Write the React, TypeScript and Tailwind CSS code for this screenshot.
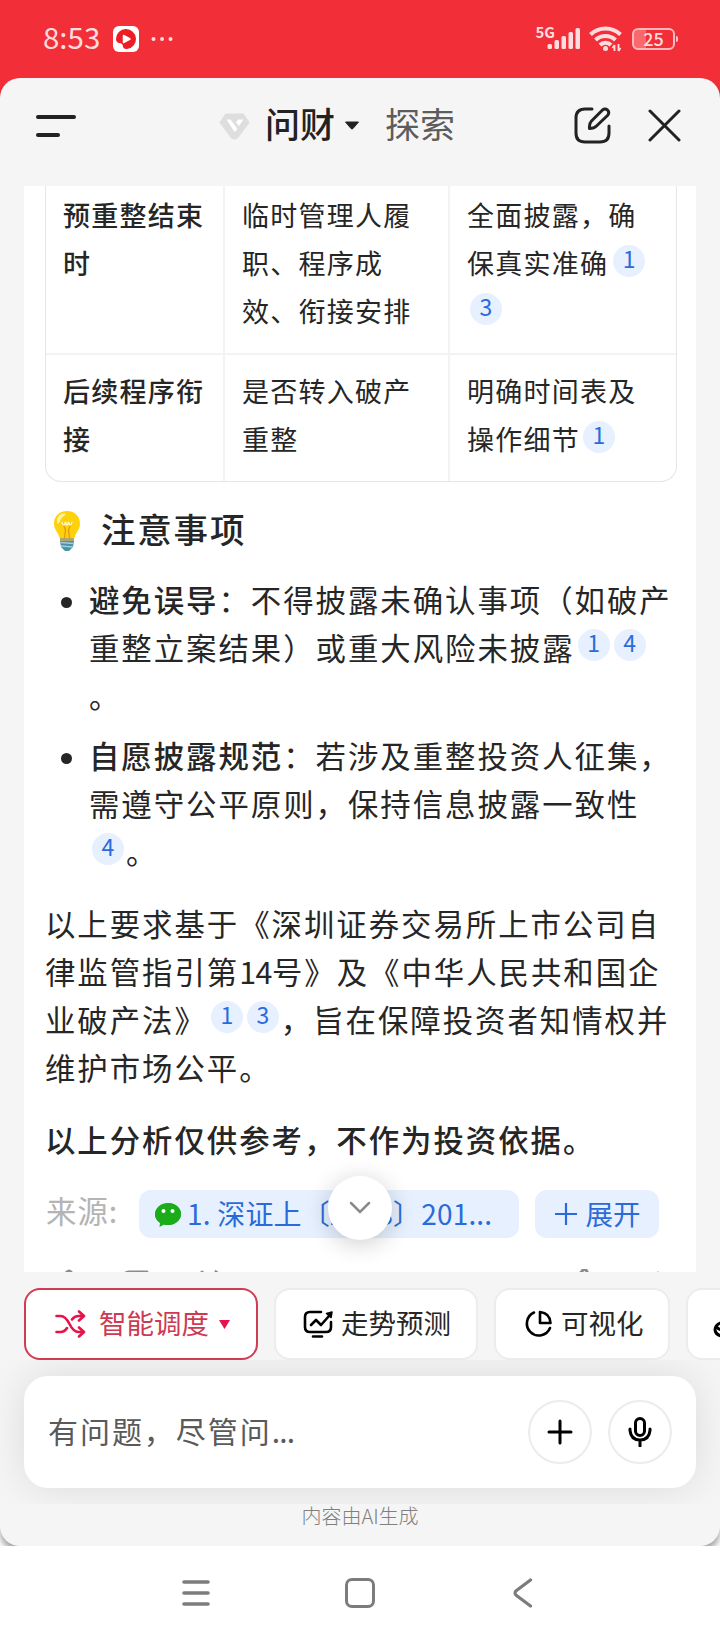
import { ReactNode } from "react";

function Cite({ n, inTable }: { n: number; inTable?: boolean }) {
  return (
    <span
      className={`relative mx-[2px] inline-flex h-8 w-8 items-center justify-center rounded-full bg-[#e6f0ff] pb-[4px] align-middle text-[23px] leading-none tracking-normal text-[#2b6bd9] ${inTable ? "-top-[6px]" : "-top-[7px]"}`}
    >
      {n}
    </span>
  );
}

function StatusBar() {
  return (
    <div className="flex h-[78px] items-center pl-[43px] pr-[42px] text-[#ffdcde]">
      <span className="w-[58px] pb-1 text-[29.500px] leading-none">8:53</span>
      <svg className="ml-3" width="26" height="26" viewBox="0 0 26 26">
        <rect width="26" height="26" rx="6" fill="#fff" />
        <path d="M3 13a10 10 0 1 1 11 10q-3 .5-4-2 0-4-4-4-3-1-3-4z" fill="#ee1c25" />
        <path d="M10.500 9.500v7l6.500-3.500z" fill="#fff" stroke="#fff" strokeWidth="1.500" strokeLinejoin="round" />
      </svg>
      <svg className="ml-3" width="24" height="6" viewBox="0 0 24 6" fill="currentColor">
        <circle cx="2.500" cy="3" r="2" />
        <circle cx="11" cy="3" r="2" />
        <circle cx="19.500" cy="3" r="2" />
      </svg>
      <div className="ml-auto flex items-center">
        <span className="-mr-2 -mt-4 text-[15px] font-bold leading-none">5G</span>
        <svg width="34" height="22" viewBox="0 0 34 22" fill="currentColor">
          <rect x="0.500" y="16" width="4.500" height="5" rx="1.500" />
          <rect x="7.500" y="12" width="4.500" height="9" rx="1.500" />
          <rect x="14.500" y="8" width="4.500" height="13" rx="1.500" />
          <rect x="21.500" y="4" width="4.500" height="17" rx="1.500" />
          <rect x="28.500" y="0" width="4.500" height="21" rx="1.500" />
        </svg>
        <svg className="ml-2" width="34" height="26" viewBox="0 0 34 26" fill="none" stroke="currentColor" strokeWidth="4">
          <path d="M1.500 8.500a21.500 21.500 0 0 1 30 0" />
          <path d="M6.500 14a14.500 14.500 0 0 1 20 0" />
          <path d="M11 19a8 8 0 0 1 11 0" />
          <circle cx="16.500" cy="22.500" r="2.500" fill="currentColor" stroke="none" />
          <path d="M25.500 19v6m0-6-2 3M29.500 18v7m0 0 2-3" strokeWidth="1.800" />
        </svg>
        <div className="ml-[9px] flex h-[22px] w-[43px] items-center justify-center rounded-[6px] border-2 border-[#ffb9bc] bg-linear-to-r from-[#f9686d] from-30% to-transparent to-30% pb-[2px] text-[18px] font-medium leading-none">
          25
        </div>
        <div className="ml-[1px] h-[6px] w-[2px] rounded-r bg-[#ffc5c8]" />
      </div>
    </div>
  );
}

function Header() {
  return (
    <header className="flex h-[108px] items-center pb-[16px] pl-9 pr-[39px]">
      <div className="flex w-[183px] flex-col gap-[14px] pt-1">
        <div className="h-1 w-10 rounded-full bg-[#222]" />
        <div className="h-1 w-6 rounded-full bg-[#222]" />
      </div>
      <svg className="mt-1" width="31" height="27" viewBox="0 0 31 27">
        <path d="M7 1.500h17l5.500 8-10.500 14q-3.500 4-7 0L1.500 9.500z" fill="#dedede" stroke="#dedede" strokeWidth="2" strokeLinejoin="round" />
        <path d="M7.500 6.500h4l7 9.500-3 3zM19 6.500h5.500l-4.500 6.500-3-3.500z" fill="#fff" />
      </svg>
      <span className="ml-[15px] pb-[3px] text-[35px] font-medium leading-none text-[#222]">问财</span>
      <svg className="ml-[9px] mt-[2px]" width="16" height="9" viewBox="0 0 16 9">
        <path d="M1.500 1h13L9 7.500q-1 1-2 0z" fill="#222" stroke="#222" strokeLinejoin="round" />
      </svg>
      <span className="ml-[25px] pb-[3px] text-[35px] leading-none text-[#5c5c5c]">探索</span>
      <div className="ml-auto flex items-center gap-[37px]">
        <svg className="mt-[3px]" width="37" height="37" viewBox="0 0 37 37" fill="none" stroke="#222" strokeWidth="3" strokeLinecap="round" strokeLinejoin="round">
          <path d="M18 2h-7Q2 2 2 11v15q0 9 9 9h15q9 0 9-9v-7" />
          <path d="M15.500 21.500q-.5-5 2-7.500L28.500 3q2.500-2 5 0 2.500 2.500 0 5.500L22.500 19q-2.500 2.500-7 2.500z" />
        </svg>
        <svg className="mt-[3px]" width="33" height="33" viewBox="0 0 33 33" fill="none" stroke="#222" strokeWidth="3" strokeLinecap="round">
          <path d="M2 2l29 29M31 2L2 31" />
        </svg>
      </div>
    </header>
  );
}

function Cell({ children, bold, last }: { children: ReactNode; bold?: boolean; last?: boolean }) {
  return (
    <div className={`pl-[17px] ${bold ? "font-medium" : ""} ${last ? "" : "border-r-2 border-[#f3f3f3]"}`}>
      {children}
    </div>
  );
}

function DataTable() {
  return (
    <div className="rounded-b-2xl border border-t-0 border-[#e6e6e6] text-[27px] leading-[48px] tracking-[1.250px]">
      <div className="grid h-[169px] grid-cols-[179px_225px_1fr] border-b-2 border-[#f3f3f3] [&>div]:pt-[5px]">
        <Cell bold>预重整结束<br />时</Cell>
        <Cell>临时管理人履<br />职、程序成<br />效、衔接安排</Cell>
        <Cell last>全面披露，确<br />保真实准确<span className="inline-block w-[3px]" /><Cite n={1} inTable /><br /><span className="inline-block w-[1px]" /><Cite n={3} inTable /></Cell>
      </div>
      <div className="grid h-[126px] grid-cols-[179px_225px_1fr] [&>div]:pt-3">
        <Cell bold>后续程序衔<br />接</Cell>
        <Cell>是否转入破产<br />重整</Cell>
        <Cell last>明确时间表及<br />操作细节<span className="inline-block w-[1px]" /><Cite n={1} inTable /></Cell>
      </div>
    </div>
  );
}

function BulbIcon() {
  return (
    <svg width="28" height="42" viewBox="0 0 28 42">
      <path d="M14 1C6 1 1 6.500 1 13.500c0 6 3.500 8 5 12.500l1 3h14l1-3c1.500-4.500 5-6.500 5-12.500C27 6.500 22 1 14 1z" fill="#fdd20a" />
      <path d="M4 11c0-5 4-8 8-7.500 2 1-1 2-3 4s-2 5-3.500 6S4 13 4 11z" fill="#fff3a0" />
      <path d="M9.500 12l3 8-1 8M18.500 12l-3 8 1 8" fill="none" stroke="#e09a10" strokeWidth="1.300" />
      <path d="M9 12q2 6 3.500 0 1.500 6 3 0 1.500 6 3.500 0" fill="none" stroke="#fff6c0" strokeWidth="1.500" />
      <path d="M7 28h14v3H7z" fill="#b5a56a" />
      <path d="M7 31h14l-1 6-4 4h-4l-4-4z" fill="#4b91a8" />
      <path d="M7.500 32.500l13 1M8 36l12 1" stroke="#9fd0dc" strokeWidth="1.300" />
    </svg>
  );
}

function Bullet({ children }: { children: ReactNode }) {
  return (
    <li className="flex">
      <span className="ml-[15px] mr-[17px] mt-[22px] h-[11px] w-[11px] shrink-0 rounded-full bg-[#262626]" />
      <div>{children}</div>
    </li>
  );
}

function Answer() {
  return (
    <main className="relative mx-6 h-[1086px] overflow-hidden whitespace-nowrap bg-white pl-[21px] pr-[19px] text-[30.400px] leading-[48px] tracking-[1.980px] text-[#262626]">
      <DataTable />
      <h3 className="mt-[22px] flex h-12 items-center text-[34.500px] font-medium tracking-[1.800px]">
        <span className="ml-2 mr-5 mt-[5px]"><BulbIcon /></span>
        注意事项
      </h3>
      <ul className="mt-[23px] space-y-3 pl-[1px]">
        <Bullet>
          <b className="font-medium">避免误导</b>：不得披露未确认事项（如破产<br />
          重整立案结果）或重大风险未披露<span className="inline-block w-[1px]" /><Cite n={1} /><Cite n={4} /><br />。
        </Bullet>
        <Bullet>
          <b className="font-medium">自愿披露规范</b>：若涉及重整投资人征集，<br />
          需遵守公平原则，保持信息披露一致性<br />
          <span className="inline-block w-[1px]" /><Cite n={4} />。
        </Bullet>
      </ul>
      <p className="mt-6">
        以上要求基于《深圳证券交易所上市公司自<br />
        律监管指引第<span className="tracking-[-0.500px]">14</span>号》及《中华人民共和国企<br />
        业破产法》<span className="inline-block w-[2px]" /><Cite n={1} /><Cite n={3} />，旨在保障投资者知情权并<br />
        维护市场公平。
      </p>
      <p className="mt-6 font-medium">以上分析仅供参考，不作为投资依据。</p>
      <div className="mt-[27px] flex h-12 tracking-normal">
        <span className="w-[94px] -translate-y-[4px] pl-[1px] tracking-[1px] text-[#b4b4b4]">来源:</span>
        <div className="flex w-[380px] items-center rounded-xl bg-[#e6f0ff] pl-4 text-[28px] tracking-[0.200px] text-[#2b6bd9]">
          <svg className="mr-[6px] mt-[2px]" width="26" height="24" viewBox="0 0 26 24">
            <path d="M13 0c7.500 0 13 5 13 11s-5.500 11-13 11q-2 0-4-.6L4.500 24l.5-4Q0 16.500 0 11 0 5 13 0z" fill="#1aad19" />
            <ellipse cx="13" cy="11" rx="13" ry="11" fill="#1aad19" />
            <circle cx="8.500" cy="8" r="2" fill="#fff" />
            <circle cx="17.500" cy="8" r="2" fill="#fff" />
          </svg>
          <span className="-mt-[3px]">1. 深证上〔2018〕201...</span>
        </div>
        <div className="ml-4 flex w-[124px] items-center justify-center gap-2 rounded-xl bg-[#e6f0ff] text-[27.500px] text-[#2b6bd9]">
          <svg width="24" height="24" viewBox="0 0 24 24" stroke="currentColor" strokeWidth="2.200">
            <path d="M12 1v22M1 12h22" />
          </svg>
          <span className="-mt-[3px]">展开</span>
        </div>
      </div>
      {/* feedback row, cut off by the bottom of the scroll area */}
      <svg className="mt-[31px]" width="630" height="30" viewBox="0 0 630 30" fill="none" stroke="#8b8b8b" strokeWidth="3" strokeLinecap="round">
        <path d="M14 12l8-9q2-2 4 0v9M80 12V6q0-3 4-3h18M157 3l5 5M168 8l3-5 5 4M532 8l6-7q2-1 3 0l4 7M613 12V4" />
      </svg>
      <button className="absolute left-[304px] top-[990px] flex h-16 w-16 items-center justify-center rounded-full bg-white shadow-[0_4px_24px_rgba(0,0,0,0.2)]">
        <svg width="22" height="14" viewBox="0 0 22 14" fill="none" stroke="#8a8a8e" strokeWidth="2.500" strokeLinecap="round">
          <path d="M2 2l9 9 9-9" />
        </svg>
      </button>
    </main>
  );
}

function Chips() {
  return (
    <div className="flex h-[88px] gap-4 overflow-hidden pl-6 pt-4 text-[27.500px] leading-none text-[#262626] [&>div]:flex [&>div]:h-[72px] [&>div]:shrink-0 [&>div]:items-center [&>div]:rounded-2xl [&>div]:border-2 [&>div]:bg-white [&_span]:-mt-[3px]">
      <div className="w-[234px] border-[#cf3c53] pl-[29px] text-[#cc3b52]">
        <svg width="31" height="28" viewBox="0 0 31 28" fill="none" stroke="#e8124a" strokeWidth="2.600" strokeLinecap="round" strokeLinejoin="round">
          <path d="M1.500 6h4q5 0 9 8t9 8h5M1.500 22h4q4 0 6.500-4M17 9.500Q19.500 6 23.500 6h5M24 1.500L29 6l-5 4.500M24 17.500l5 4.500-5 4.500" />
        </svg>
        <span className="ml-[13px]">智能调度</span>
        <svg className="ml-[10px]" width="11" height="9" viewBox="0 0 11 9">
          <path d="M0 0h11L5.500 9z" fill="#e8124a" />
        </svg>
      </div>
      <div className="w-[204px] border-[#ececec] pl-[27px]">
        <svg width="31" height="28" viewBox="0 0 31 28" fill="none" stroke="#000" strokeWidth="2.600" strokeLinecap="round" strokeLinejoin="round">
          <path d="M18 2H7Q2 2 2 7v10q0 5 5 5h16q5 0 5-5v-5M10 26.500h9M8 15l5-5 5 5 8-9" />
          <path d="M23.500 3.500L29 2l-1 5.500z" fill="#000" strokeWidth="1.500" />
        </svg>
        <span className="ml-[7px]">走势预测</span>
      </div>
      <div className="w-[176px] border-[#ececec] pl-7">
        <svg width="28" height="28" viewBox="0 0 28 28" fill="none" stroke="#000" strokeWidth="2.600" strokeLinecap="round" strokeLinejoin="round">
          <path d="M10 2.500A12 12 0 1 0 26 18" />
          <path d="M16 2q10 1 10.500 11H16z" />
        </svg>
        <span className="ml-[9px]">可视化</span>
      </div>
      <div className="w-[176px] border-[#ececec] pl-[25px]">
        <svg width="28" height="28" viewBox="0 0 28 28" fill="none" stroke="#000" strokeWidth="3">
          <path d="M10 12q-8 2-8 8 1 6 8 6M3 16q4 6 9 2" />
        </svg>
      </div>
    </div>
  );
}

function InputBar() {
  return (
    <div className="h-36 overflow-hidden px-6 pt-4">
      <div className="flex h-28 items-center gap-4 rounded-3xl bg-white pl-6 pr-6 shadow-[0_0_40px_rgba(0,0,0,0.11)]">
        <span className="flex-1 pb-1 text-[30px] tracking-[1.950px] text-[#5a5a5a]">有问题，尽管问<span className="tracking-[-0.800px]">...</span></span>
        <button className="flex h-16 w-16 items-center justify-center rounded-full border-2 border-[#ececec]">
          <svg width="26" height="26" viewBox="0 0 26 26" stroke="#000" strokeWidth="3" strokeLinecap="round">
            <path d="M13 2v22M2 13h22" />
          </svg>
        </button>
        <button className="flex h-16 w-16 items-center justify-center rounded-full border-2 border-[#ececec]">
          <svg width="24" height="30" viewBox="0 0 24 30" fill="none" stroke="#000" strokeWidth="3" strokeLinecap="round">
            <rect x="7.500" y="1.500" width="9" height="17" rx="4.500" />
            <path d="M2 12v1.500q1 9.500 10 9.500t10-9.500V12M12 23v6" />
          </svg>
        </button>
      </div>
    </div>
  );
}

function NavBar() {
  return (
    <nav className="relative flex h-[94px] items-center bg-white pl-[182px] text-[#7c7c7c]">
      <svg width="28" height="26" viewBox="0 0 28 26" stroke="currentColor" strokeWidth="3.600" strokeLinecap="round">
        <path d="M2 2h24M2 13h24M2 24h24" />
      </svg>
      <div className="ml-[135px] h-[30px] w-[30px] rounded-[7px] border-[3.500px] border-current" />
      <svg className="ml-[138px]" width="20" height="30" viewBox="0 0 20 30" fill="none" stroke="currentColor" strokeWidth="3.200" strokeLinecap="round">
        <path d="M17.500 2L3.500 12.500q-3 2.500 0 5L17.500 28" />
      </svg>
    </nav>
  );
}

export default function App() {
  return (
    <div className="h-[1640px] w-[720px] overflow-hidden bg-linear-to-b from-[#f22f38] from-50% to-white to-50% font-['Noto_Sans_CJK_SC',sans-serif]">
      <StatusBar />
      <div className="h-[1468px] rounded-[20px] bg-[#f5f5f5] shadow-[0_6px_6px_rgba(0,0,0,0.35)]">
        <Header />
        <Answer />
        <Chips />
        <InputBar />
        <p className="text-center text-[20px] font-light leading-6 text-[#808080]">内容由AI生成</p>
      </div>
      <NavBar />
    </div>
  );
}
